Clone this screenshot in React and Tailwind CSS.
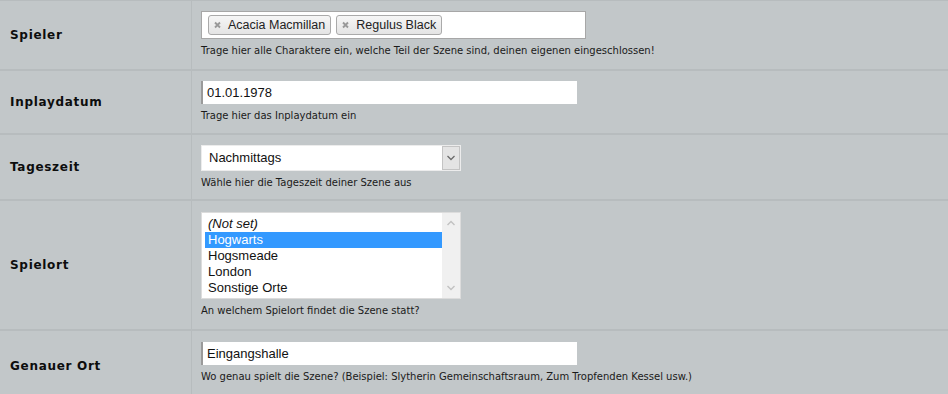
import React from "react";

const desc = "text-[10px] leading-[12px] text-[#1a1a1a] mt-[6px]";
const lbl = "font-bold text-[12px] tracking-[0.7px] text-[#0d0d0d]";

function Tag({ children }) {
  return (
    <div className="flex items-center h-[20px] pl-[3px] pr-[5px] rounded-[3px] border border-[#aaaaaa] bg-gradient-to-b from-[#f6f6f6] to-[#e4e4e4] text-[12.5px] text-[#222]">
      <svg width="12" height="8" viewBox="0 0 12 8" className="mr-[4px]">
        <path d="M3 1.5 L8 6.5 M8 1.5 L3 6.5" stroke="#999" strokeWidth="1.9" />
      </svg>
      {children}
    </div>
  );
}

function Row({ label, h, pt, children, last }) {
  return (
    <div className={`flex ${last ? "" : "border-b-2 border-[#b7bcbe]"}`} style={{ height: h }}>
      <div className="w-[192px] shrink-0 border-r border-[#b7bcbe] flex items-center pl-[10px]">
        <span className={lbl}>{label}</span>
      </div>
      <div className="flex-1 pl-[9px]" style={{ paddingTop: pt }}>
        {children}
      </div>
    </div>
  );
}

export default function App() {
  return (
    <div
      className="w-[948px] h-[394px] overflow-hidden bg-[#c2c7c9] border-t border-[#b7bcbe]"
      style={{ fontFamily: '"DejaVu Sans", Verdana, sans-serif' }}
    >
      <Row label="Spieler" h={70} pt={10}>
        <div
          className="w-[385px] h-[28px] bg-white border border-[#a7a7a7] flex items-center gap-[5px] px-[6px]"
          style={{ fontFamily: '"Liberation Sans", Arial, sans-serif' }}
        >
          <Tag>Acacia Macmillan</Tag>
          <Tag>Regulus Black</Tag>
        </div>
        <div className={desc}>
          Trage hier alle Charaktere ein, welche Teil der Szene sind, deinen eigenen eingeschlossen!
        </div>
      </Row>
      <Row label="Inplaydatum" h={64} pt={10}>
        <div
          className="w-[376px] h-[23px] bg-white border-l-2 border-[#9a9a9a] flex items-center pl-[4px] text-[13px] text-[#111]"
          style={{ fontFamily: '"Liberation Sans", Arial, sans-serif' }}
        >
          01.01.1978
        </div>
        <div className={desc}>Trage hier das Inplaydatum ein</div>
      </Row>
      <Row label="Tageszeit" h={66} pt={10}>
        <div
          className="w-[260px] h-[26px] bg-white border border-[#ececec] flex items-stretch text-[13px] text-[#111]"
          style={{ fontFamily: '"Liberation Sans", Arial, sans-serif' }}
        >
          <div className="flex-1 flex items-center pl-[7px]">Nachmittags</div>
          <div className="w-[18px] bg-[#e4e4e4] border border-[#c4c4c4] flex items-center justify-center">
            <svg width="10" height="6" viewBox="0 0 10 6">
              <path d="M1.5 1 L5 4.5 L8.5 1" stroke="#6b6b6b" strokeWidth="1.3" fill="none" />
            </svg>
          </div>
        </div>
        <div className={desc}>Wähle hier die Tageszeit deiner Szene aus</div>
      </Row>
      <Row label="Spielort" h={130} pt={11}>
        <div
          className="w-[260px] h-[87px] bg-white border border-[#dcdcdc] flex text-[13px] text-[#111]"
          style={{ fontFamily: '"Liberation Sans", Arial, sans-serif' }}
        >
          <div className="flex-1 pl-[3px] pt-[3px]">
            <div className="h-[16px] leading-[16px] pl-[3px] italic">(Not set)</div>
            <div className="h-[16px] leading-[16px] pl-[3px] bg-[#3399ff] text-white">Hogwarts</div>
            <div className="h-[16px] leading-[16px] pl-[3px]">Hogsmeade</div>
            <div className="h-[16px] leading-[16px] pl-[3px]">London</div>
            <div className="h-[16px] leading-[16px] pl-[3px]">Sonstige Orte</div>
          </div>
          <div className="w-[18px] bg-[#f0f0f0] flex flex-col justify-between items-center py-[7px]">
            <svg width="10" height="6" viewBox="0 0 10 6">
              <path d="M1.5 5 L5 1.5 L8.5 5" stroke="#c2c2c2" strokeWidth="1.4" fill="none" />
            </svg>
            <svg width="10" height="6" viewBox="0 0 10 6">
              <path d="M1.5 1 L5 4.5 L8.5 1" stroke="#c2c2c2" strokeWidth="1.4" fill="none" />
            </svg>
          </div>
        </div>
        <div className={desc}>An welchem Spielort findet die Szene statt?</div>
      </Row>
      <Row label="Genauer Ort" h={70} pt={11} last>
        <div
          className="w-[376px] h-[23px] bg-white border-l-2 border-[#9a9a9a] flex items-center pl-[4px] text-[13px] text-[#111]"
          style={{ fontFamily: '"Liberation Sans", Arial, sans-serif' }}
        >
          Eingangshalle
        </div>
        <div className={desc}>
          Wo genau spielt die Szene? (Beispiel: Slytherin Gemeinschaftsraum, Zum Tropfenden Kessel usw.)
        </div>
      </Row>
    </div>
  );
}
